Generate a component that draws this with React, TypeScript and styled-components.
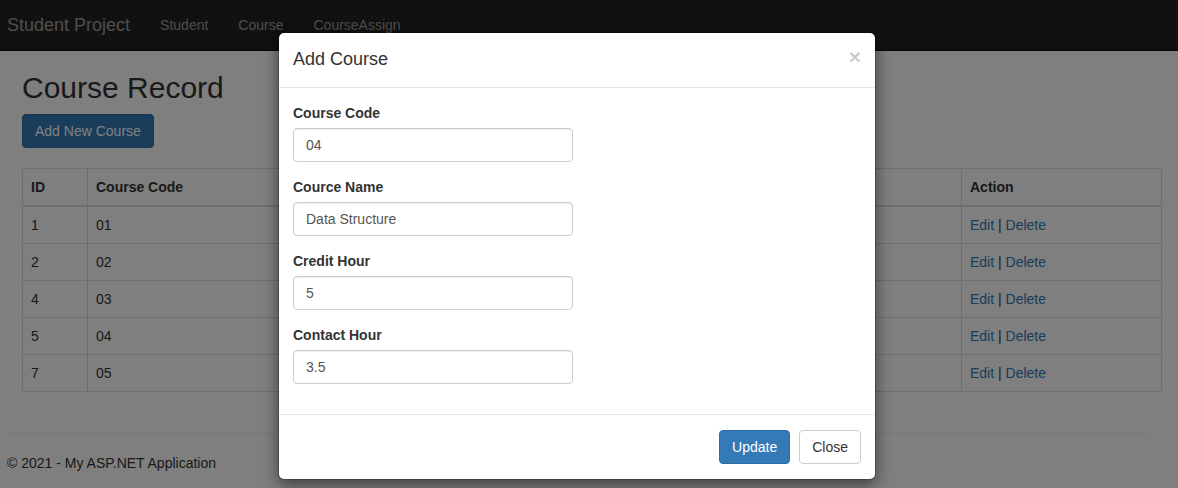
import React from "react";
import styled, { createGlobalStyle } from "styled-components";

const GlobalStyle = createGlobalStyle`
  * { box-sizing: border-box; }
  html, body { margin: 0; padding: 0; }
  body {
    font-family: "Liberation Sans", Arial, sans-serif;
    font-size: 14px;
    line-height: 1.42857;
    color: #333;
    background: #fff;
    width: 1178px;
    height: 488px;
    overflow: hidden;
  }
`;

const Page = styled.div`
  position: relative;
  width: 1178px;
  height: 488px;
`;

const Navbar = styled.nav`
  display: flex;
  align-items: center;
  height: 51px;
  background: #222;
  border-bottom: 1px solid #080808;
`;

const Brand = styled.a`
  padding: 15px 15px 15px 7px;
  font-size: 18px;
  line-height: 20px;
  color: #9d9d9d;
  text-decoration: none;
`;

const NavLink = styled.a`
  padding: 15px;
  line-height: 20px;
  color: #9d9d9d;
  text-decoration: none;
`;

const Content = styled.main`
  padding: 0 16px 0 22px;
`;

const Title = styled.h2`
  margin: 20px 0 10px;
  font-size: 30px;
  font-weight: 500;
  line-height: 1.1;
`;

const Button = styled.button<{ $variant?: "primary" | "default" }>`
  display: inline-block;
  padding: 6px 12px;
  font-family: inherit;
  font-size: 14px;
  line-height: 20px;
  border-radius: 4px;
  border: 1px solid ${(p) => (p.$variant === "default" ? "#ccc" : "#2e6da4")};
  background: ${(p) => (p.$variant === "default" ? "#fff" : "#337ab7")};
  color: ${(p) => (p.$variant === "default" ? "#333" : "#fff")};
  cursor: pointer;
`;

const Table = styled.table`
  width: 100%;
  margin: 20px 0;
  border-collapse: collapse;
  table-layout: fixed;
  border: 1px solid #ddd;
`;

const Th = styled.th<{ $w?: number }>`
  width: ${(p) => (p.$w ? `${p.$w}px` : "auto")};
  padding: 8px;
  text-align: left;
  font-weight: bold;
  line-height: 20px;
  border: 1px solid #ddd;
  border-bottom: 2px solid #ddd;
`;

const Td = styled.td`
  padding: 8px;
  line-height: 20px;
  border: 1px solid #ddd;
`;

const Link = styled.a`
  color: #337ab7;
  text-decoration: none;
`;

const Footer = styled.footer`
  padding: 0 30px 0 7px;
`;

const Rule = styled.hr`
  margin: 41px 0 20px;
  border: 0;
  border-top: 1px solid #eee;
`;

const FooterText = styled.p`
  margin: 0;
`;

const Backdrop = styled.div`
  position: absolute;
  inset: 0;
  background: rgba(0, 0, 0, 0.5);
`;

const Modal = styled.div`
  position: absolute;
  left: 278px;
  top: 32px;
  width: 598px;
  background: #fff;
  border: 1px solid rgba(0, 0, 0, 0.2);
  border-radius: 6px;
  box-shadow: 0 5px 15px rgba(0, 0, 0, 0.5);
  background-clip: padding-box;
`;

const ModalHeader = styled.div`
  display: flex;
  align-items: flex-start;
  justify-content: space-between;
  padding: 14px 14px 15px;
  border-bottom: 1px solid #e5e5e5;
`;

const ModalTitle = styled.h4`
  margin: 0;
  font-size: 18px;
  font-weight: 500;
  line-height: 25px;
`;

const CloseX = styled.button`
  margin-top: -1px;
  padding: 0;
  border: 0;
  background: transparent;
  font-family: inherit;
  font-size: 21px;
  font-weight: bold;
  line-height: 1;
  color: #000;
  opacity: 0.2;
  text-shadow: 0 1px 0 #fff;
`;

const ModalBody = styled.div`
  padding: 15px 14px;
`;

const FormGroup = styled.div`
  margin-bottom: 15px;
`;

const Label = styled.label`
  display: block;
  margin-bottom: 5px;
  font-weight: bold;
  line-height: 20px;
`;

const Input = styled.input`
  display: block;
  width: 280px;
  height: 34px;
  padding: 6px 12px;
  font-family: inherit;
  font-size: 14px;
  line-height: 20px;
  color: #555;
  background: #fff;
  border: 1px solid #ccc;
  border-radius: 4px;
  box-shadow: inset 0 1px 1px rgba(0, 0, 0, 0.075);
`;

const ModalFooter = styled.div`
  display: flex;
  justify-content: flex-end;
  gap: 9px;
  padding: 15px 14px;
  border-top: 1px solid #e5e5e5;
`;

const rows = [
  { id: 1, code: "01", name: "Algorithm", credit: "3", contact: "3" },
  { id: 2, code: "02", name: "Database", credit: "3", contact: "3" },
  { id: 4, code: "03", name: "Networking", credit: "3", contact: "3" },
  { id: 5, code: "04", name: "Data Structure", credit: "5", contact: "3.5" },
  { id: 7, code: "05", name: "Compiler", credit: "3", contact: "3" },
];

const fields = [
  { label: "Course Code", value: "04" },
  { label: "Cource Name", value: "Data Structure" },
  { label: "Credit Hour", value: "5" },
  { label: "Contact Hour", value: "3.5" },
];

export default function App() {
  return (
    <Page>
      <GlobalStyle />
      <Navbar>
        <Brand href="#">Student Project</Brand>
        <NavLink href="#">Student</NavLink>
        <NavLink href="#">Course</NavLink>
        <NavLink href="#">CourseAssign</NavLink>
      </Navbar>
      <Content>
        <Title>Course Record</Title>
        <Button $variant="primary">Add New Course</Button>
        <Table>
          <thead>
            <tr>
              <Th $w={65}>ID</Th>
              <Th $w={250}>Course Code</Th>
              <Th $w={200}>Course Name</Th>
              <Th $w={163}>Credit Hour</Th>
              <Th $w={261}>Contact Hour</Th>
              <Th>Action</Th>
            </tr>
          </thead>
          <tbody>
            {rows.map((r) => (
              <tr key={r.id}>
                <Td>{r.id}</Td>
                <Td>{r.code}</Td>
                <Td>{r.name}</Td>
                <Td>{r.credit}</Td>
                <Td>{r.contact}</Td>
                <Td>
                  <Link href="#">Edit</Link> | <Link href="#">Delete</Link>
                </Td>
              </tr>
            ))}
          </tbody>
        </Table>
      </Content>
      <Footer>
        <Rule />
        <FooterText>© 2021 - My ASP.NET Application</FooterText>
      </Footer>
      <Backdrop />
      <Modal>
        <ModalHeader>
          <ModalTitle>Add Course</ModalTitle>
          <CloseX>×</CloseX>
        </ModalHeader>
        <ModalBody>
          {fields.map((f) => (
            <FormGroup key={f.label}>
              <Label>{f.label}</Label>
              <Input defaultValue={f.value} />
            </FormGroup>
          ))}
        </ModalBody>
        <ModalFooter>
          <Button $variant="primary">Update</Button>
          <Button $variant="default">Close</Button>
        </ModalFooter>
      </Modal>
    </Page>
  );
}
